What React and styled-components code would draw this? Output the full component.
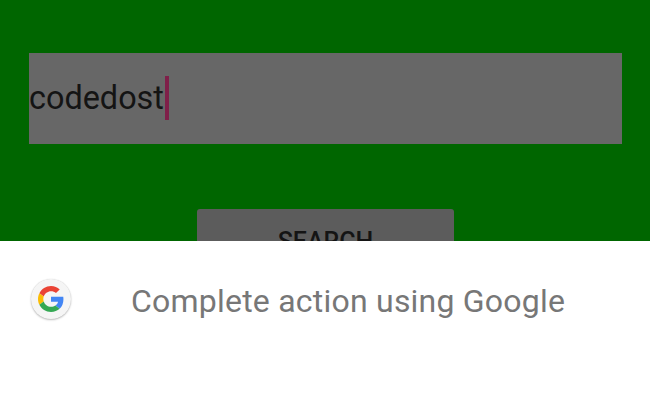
import React from "react";
import styled, { createGlobalStyle } from "styled-components";

const Global = createGlobalStyle`
  html, body { margin: 0; padding: 0; background: #fff; }
  body { font-family: Roboto, "Liberation Sans", sans-serif; }
`;

const Screen = styled.div`
  width: 650px;
  height: 400px;
  display: flex;
  flex-direction: column;
  overflow: hidden;
`;

const Backdrop = styled.div`
  height: 241px;
  flex: none;
  box-sizing: border-box;
  background: #006600;
  padding: 53px 28px 0 29px;
  overflow: hidden;
  display: flex;
  flex-direction: column;
`;

const Field = styled.div`
  height: 91px;
  flex: none;
  box-sizing: border-box;
  padding-bottom: 2px;
  background: #676767;
  display: flex;
  align-items: center;
  color: #141414;
  font-size: 32.4px;
`;

const Caret = styled.span`
  flex: none;
  width: 4px;
  height: 44px;
  margin-left: 1px;
  background: #7f1f49;
`;

const SearchButton = styled.div`
  width: 257px;
  height: 64px;
  flex: none;
  margin: 65px 0 0 168px;
  border-radius: 3px;
  background: #5c5c5c;
  color: #141414;
  font-size: 25px;
  font-weight: 500;
  display: flex;
  align-items: center;
  justify-content: center;
`;

const Sheet = styled.div`
  flex: 1;
  background: #fff;
  display: flex;
  align-items: flex-start;
  padding: 38px 0 0 31px;
`;

const IconBadge = styled.div`
  width: 40px;
  height: 40px;
  flex: none;
  border-radius: 50%;
  background: #f5f5f5;
  box-shadow: 0 1px 2px rgba(0, 0, 0, 0.25), 0 0 1px rgba(0, 0, 0, 0.15);
  display: flex;
  align-items: center;
  justify-content: center;
`;

const SheetTitle = styled.div`
  margin: 2px 0 0 60px;
  line-height: 40px;
  color: #777777;
  font-size: 32px;
  letter-spacing: 0.22px;
  white-space: nowrap;
`;

const GoogleG = () => (
  <svg width="26" height="26" viewBox="0 0 48 48" aria-hidden="true">
    <path fill="#EA4335" d="M24 9.5c3.54 0 6.71 1.22 9.21 3.6l6.85-6.85C35.9 2.38 30.47 0 24 0 14.62 0 6.51 5.38 2.56 13.22l7.98 6.19C12.43 13.72 17.74 9.5 24 9.5z" />
    <path fill="#4285F4" d="M46.98 24.55c0-1.57-.15-3.09-.38-4.55H24v9.02h12.94c-.58 2.96-2.26 5.48-4.78 7.18l7.73 6c4.51-4.18 7.09-10.36 7.09-17.65z" />
    <path fill="#FBBC05" d="M10.53 28.59c-.48-1.45-.76-2.99-.76-4.59s.27-3.14.76-4.59l-7.98-6.19C.92 16.46 0 20.12 0 24c0 3.88.92 7.54 2.56 10.78l7.97-6.19z" />
    <path fill="#34A853" d="M24 48c6.48 0 11.93-2.13 15.89-5.81l-7.73-6c-2.15 1.45-4.92 2.3-8.16 2.3-6.26 0-11.57-4.22-13.47-9.91l-7.98 6.19C6.51 42.62 14.62 48 24 48z" />
  </svg>
);

export default function App() {
  return (
    <Screen>
      <Global />
      <Backdrop>
        <Field>
          <span>codedost</span>
          <Caret />
        </Field>
        <SearchButton>SEARCH</SearchButton>
      </Backdrop>
      <Sheet>
        <IconBadge>
          <GoogleG />
        </IconBadge>
        <SheetTitle>Complete action using Google</SheetTitle>
      </Sheet>
    </Screen>
  );
}
